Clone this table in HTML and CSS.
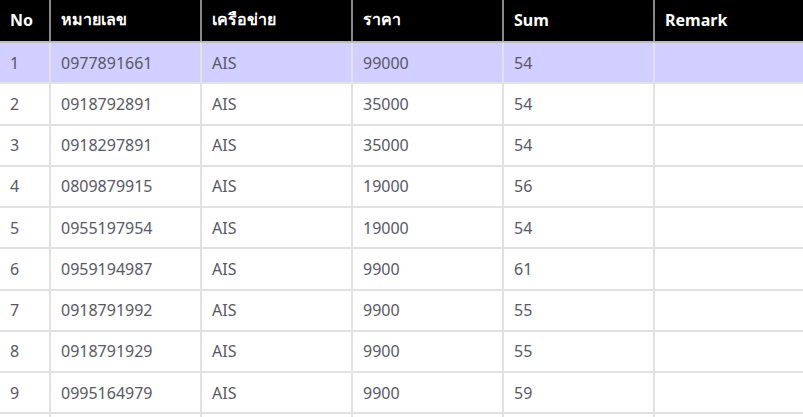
FILE: index.html
```html
<!DOCTYPE html>
<html lang="th">
<head>
<meta charset="utf-8">
<link rel="stylesheet" href="styles.css">
</head>
<body>
<table class="grid">
  <colgroup>
    <col class="c-no"><col class="c-w"><col class="c-w"><col class="c-w"><col class="c-w"><col class="c-w">
  </colgroup>
  <thead>
    <tr><th>No</th><th>หมายเลข</th><th>เครือข่าย</th><th>ราคา</th><th>Sum</th><th>Remark</th></tr>
  </thead>
  <tbody>
    <tr class="sel"><td>1</td><td>0977891661</td><td>AIS</td><td>99000</td><td>54</td><td></td></tr>
    <tr><td>2</td><td>0918792891</td><td>AIS</td><td>35000</td><td>54</td><td></td></tr>
    <tr><td>3</td><td>0918297891</td><td>AIS</td><td>35000</td><td>54</td><td></td></tr>
    <tr><td>4</td><td>0809879915</td><td>AIS</td><td>19000</td><td>56</td><td></td></tr>
    <tr><td>5</td><td>0955197954</td><td>AIS</td><td>19000</td><td>54</td><td></td></tr>
    <tr><td>6</td><td>0959194987</td><td>AIS</td><td>9900</td><td>61</td><td></td></tr>
    <tr><td>7</td><td>0918791992</td><td>AIS</td><td>9900</td><td>55</td><td></td></tr>
    <tr><td>8</td><td>0918791929</td><td>AIS</td><td>9900</td><td>55</td><td></td></tr>
    <tr><td>9</td><td>0995164979</td><td>AIS</td><td>9900</td><td>59</td><td></td></tr>
    <tr><td></td><td></td><td></td><td></td><td></td><td></td></tr>
  </tbody>
</table>
</body>
</html>
```
FILE: styles.css
```css
html, body {
  margin: 0;
  padding: 0;
  background: #fff;
  overflow: hidden;
}
body {
  font-family: "Noto Sans", "Open Sans", sans-serif;
  font-size: 16px;
  color: #555;
}
.grid {
  border-collapse: collapse;
  table-layout: fixed;
  width: 805px;
}
.c-no { width: 50px; }
.c-w { width: 151px; }
.grid th {
  background: #000;
  color: #fff;
  font-weight: 700;
  text-align: left;
  height: 42px;
  padding: 0 10px 2px;
  box-sizing: border-box;
  border-left: 2px solid #888;
  border-bottom: 2px solid #bbb;
}
.grid th:first-child { border-left: none; }
.grid td {
  height: 41.25px;
  box-sizing: border-box;
  padding: 0 10px;
  border-left: 2px solid #e2e2e2;
  border-bottom: 2px solid #e2e2e2;
  color: #585866;
}
.grid td:first-child { border-left: none; }
.grid tr.sel td { background: #d0cfff; }
```
